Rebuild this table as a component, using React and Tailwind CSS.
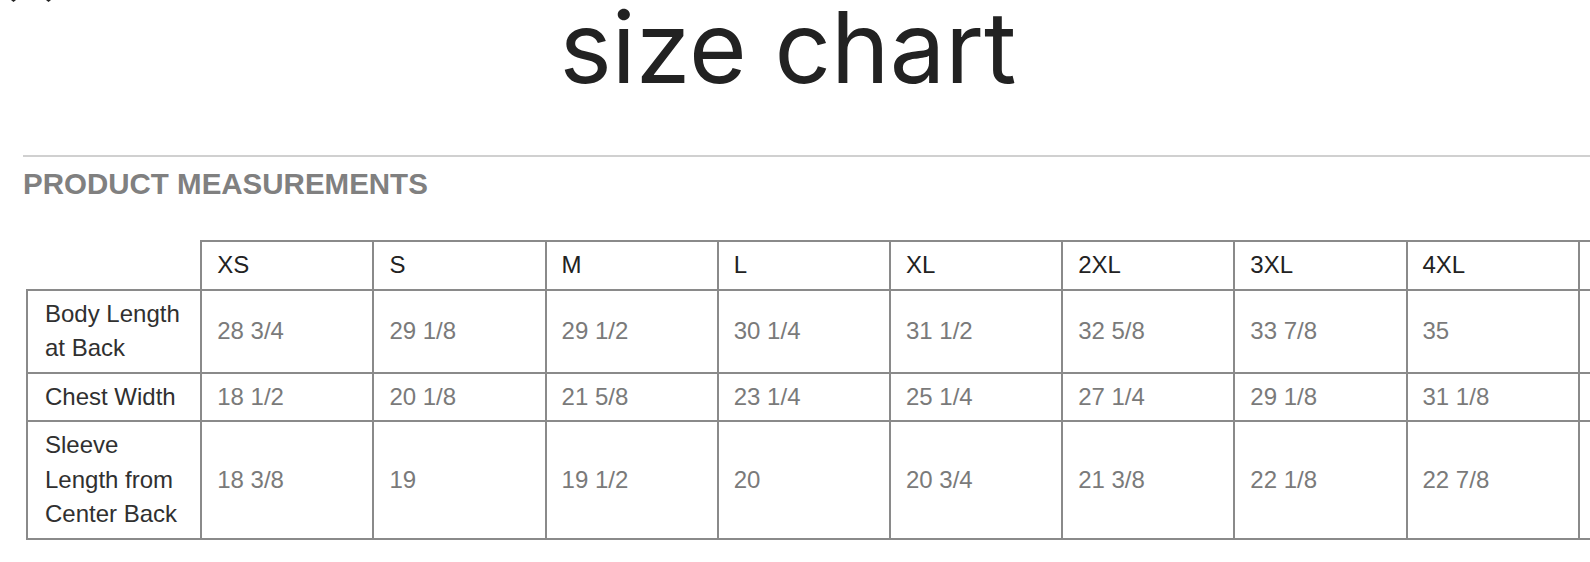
const sizes = ["XS", "S", "M", "L", "XL", "2XL", "3XL", "4XL", ""];

const rows = [
  {
    label: ["Body Length", "at Back"],
    values: ["28 3/4", "29 1/8", "29 1/2", "30 1/4", "31 1/2", "32 5/8", "33 7/8", "35", ""],
  },
  {
    label: ["Chest Width"],
    values: ["18 1/2", "20 1/8", "21 5/8", "23 1/4", "25 1/4", "27 1/4", "29 1/8", "31 1/8", ""],
  },
  {
    label: ["Sleeve", "Length from", "Center Back"],
    values: ["18 3/8", "19", "19 1/2", "20", "20 3/4", "21 3/8", "22 1/8", "22 7/8", ""],
  },
];

function Arrows() {
  return (
    <div className="flex h-[2px] gap-[30px] pl-[11px]">
      <svg width="5" height="2" viewBox="0 0 5 2">
        <path d="M0 0 H5 L2.5 2 Z" fill="#222" />
      </svg>
      <svg width="5" height="2" viewBox="0 0 5 2">
        <path d="M0 0 H5 L2.5 2 Z" fill="#222" />
      </svg>
    </div>
  );
}

function SizeTable() {
  return (
    <table className="table-fixed border-collapse w-[1726px] text-[24px] leading-[34.5px] font-['Liberation_Sans',Arial,sans-serif]">
      <colgroup>
        <col className="w-[174px]" />
        {sizes.map((s, i) => (
          <col key={i} className="w-[172px]" />
        ))}
      </colgroup>
      <thead>
        <tr>
          <th className="border-0"></th>
          {sizes.map((s, i) => (
            <th
              key={i}
              className="border-2 border-[#8a8a8a] px-[15px] py-[6px] text-left font-normal text-[#222]"
            >
              {s || "\u00a0"}
            </th>
          ))}
        </tr>
      </thead>
      <tbody>
        {rows.map((row) => (
          <tr key={row.label[0]}>
            <td className="border-2 border-[#8a8a8a] pl-[17px] pr-[8px] py-[6px] text-[#303030]">
              {row.label.map((l) => (
                <div key={l}>{l}</div>
              ))}
            </td>
            {row.values.map((v, i) => (
              <td
                key={i}
                className="border-2 border-[#8a8a8a] px-[15px] py-[6px] text-[#7a7a7a]"
              >
                {v}
              </td>
            ))}
          </tr>
        ))}
      </tbody>
    </table>
  );
}

export default function App() {
  return (
    <div className="w-full h-[562px] overflow-hidden bg-white">
      <Arrows />
      <div className="pl-[23px]">
        <h1 className="w-[1530px] -mt-[15px] text-center text-[99px] leading-[120px] font-normal text-[#222] font-['Inter','Noto_Sans',sans-serif] whitespace-nowrap">
          size chart
        </h1>
        <div className="mt-[48px] h-[2px] bg-[#d0d0d0]"></div>
        <h2 className="mt-[10px] text-[29.5px] leading-[33px] font-bold text-[#808080] font-['Liberation_Sans',Arial,sans-serif]">
          PRODUCT MEASUREMENTS
        </h2>
        <div className="mt-[40px] pl-[3px]">
          <SizeTable />
        </div>
      </div>
    </div>
  );
}
